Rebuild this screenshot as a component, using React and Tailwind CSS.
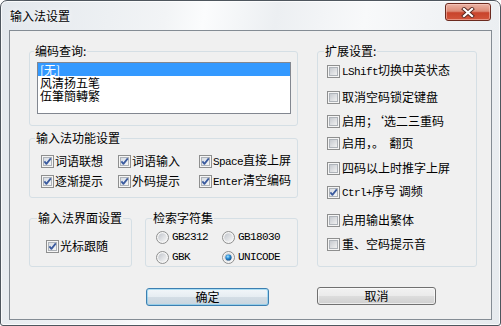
const CJK = "font-['Noto_Sans_CJK_SC','Noto_Sans',sans-serif]";

const Lat = ({ children }) => (
  <span className="font-['Liberation_Mono',monospace] text-[11px] tracking-[-0.6px]">
    {children}
  </span>
);

const CheckBox = ({ checked }) => (
  <svg width="13" height="13" viewBox="0 0 13 13" className="shrink-0">
    <defs>
      <linearGradient id="cbU" x1="0" y1="0" x2="1" y2="1">
        <stop offset="0" stopColor="#c3c7cd" />
        <stop offset="1" stopColor="#f3f3f3" />
      </linearGradient>
      <linearGradient id="cbC" x1="0" y1="0" x2="1" y2="1">
        <stop offset="0" stopColor="#d6dbe2" />
        <stop offset="1" stopColor="#f6f7f8" />
      </linearGradient>
    </defs>
    <rect x="0.5" y="0.5" width="12" height="12" fill="#f5f5f5" stroke="#8e8f8f" />
    <rect
      x="2.5"
      y="2.5"
      width="8"
      height="8"
      fill={checked ? "url(#cbC)" : "url(#cbU)"}
      stroke="#aeb3b9"
    />
    {checked && (
      <path
        d="M3.4 6.4 L5.4 8.9 L9.8 3.4"
        stroke="#3a5a9e"
        strokeWidth="1.7"
        fill="none"
        strokeLinejoin="round"
      />
    )}
  </svg>
);

const Radio = ({ checked }) => (
  <svg width="13" height="13" viewBox="0 0 13 13" className="shrink-0">
    <defs>
      <linearGradient id="rbg" x1="0" y1="0" x2="1" y2="1">
        <stop offset="0" stopColor="#c2c6cc" />
        <stop offset="1" stopColor="#f7f7f7" />
      </linearGradient>
      <radialGradient id="rdot" cx="0.4" cy="0.35" r="0.7">
        <stop offset="0" stopColor="#a8e6ff" />
        <stop offset="0.45" stopColor="#2b8fd8" />
        <stop offset="1" stopColor="#11457a" />
      </radialGradient>
    </defs>
    <circle cx="6.5" cy="6.5" r="6" fill="#f5f5f5" stroke="#8e8f8f" />
    <circle cx="6.5" cy="6.5" r="4.3" fill="url(#rbg)" />
    {checked && <circle cx="6.5" cy="6.5" r="3.1" fill="url(#rdot)" />}
  </svg>
);

const Group = ({ title, className, legend = "ml-[5px]", children }) => (
  <fieldset
    className={`border border-[#d5dfe5] rounded-[3px] min-w-0 shrink-0 ${className}`}
  >
    <legend className={`px-[1px] text-[12px] leading-[12px] text-black ${legend}`}>
      {title}
    </legend>
    {children}
  </fieldset>
);

const Check = ({ checked, gap = "gap-[1px]", children }) => (
  <div className={`h-[20px] flex items-center ${gap} text-[12px] whitespace-pre`}>
    <CheckBox checked={checked} />
    <span>{children}</span>
  </div>
);

const RadioItem = ({ checked, children }) => (
  <div className="h-[16px] flex items-center gap-[3px] text-[12px]">
    <Radio checked={checked} />
    <Lat>{children}</Lat>
  </div>
);

const extOptions = [
  { mt: "mt-[4px]", label: <><Lat>LShift</Lat>切换中英状态</> },
  { mt: "mt-[6px]", label: "取消空码锁定键盘" },
  { mt: "mt-[4px]", label: "启用；‘选二三重码" },
  { mt: "mt-[2px]", label: "启用，。  翻页" },
  { mt: "mt-[5px]", label: "四码以上时推字上屏" },
  { mt: "mt-[4px]", label: <><Lat>Ctrl+</Lat>序号 调频</>, checked: true },
  { mt: "mt-[8px]", label: "启用输出繁体" },
  { mt: "mt-[4px]", label: "重、空码提示音" },
];

export default function App() {
  return (
    <div className="w-[501px] h-[326px] bg-white">
      <div
        className={`w-[501px] h-[326px] rounded-t-[7px] rounded-b-[3px] border border-[#4e565e] shadow-[inset_0_0_0_1px_rgba(255,255,255,0.75)] bg-[linear-gradient(100deg,#e3e8ed_0%,#f2f4f6_30%,#fbfcfd_37%,#eceff2_50%,#f8f9fa_66%,#e6eaee_100%)] flex flex-col px-[8px] pb-[5px] text-black ${CJK}`}
      >
        {/* title bar */}
        <div className="h-[29px] flex items-start">
          <span className="mt-[8px] ml-[1px] text-[12px] leading-[14px] [text-shadow:0_0_6px_#fff]">
            输入法设置
          </span>
          <div className="ml-auto mr-[1px] mt-[2px] w-[46px] h-[18px] rounded-[3px] border border-[#6b2a1f] bg-[linear-gradient(to_bottom,#eab3a5_0%,#dd8c77_45%,#c8432b_55%,#d2553b_100%)] shadow-[inset_0_0_0_1px_rgba(255,210,200,0.5)] flex items-center justify-center">
            <svg width="14" height="11" viewBox="0 0 14 11">
              <path
                d="M3 2 L11 9 M11 2 L3 9"
                stroke="#5a2a22"
                strokeWidth="4"
                strokeLinecap="square"
              />
              <path
                d="M3 2 L11 9 M11 2 L3 9"
                stroke="#ffffff"
                strokeWidth="2.2"
                strokeLinecap="square"
              />
            </svg>
          </div>
        </div>

        {/* client area */}
        <div className="flex-1 border border-[#848c94] bg-[#f0f0f0] pt-[14px] pl-[19px] flex flex-col">
          <div className="flex gap-[19px]">
            <div className="w-[269px] flex flex-col">
              <Group title="编码查询:" className="h-[81px]" legend="ml-[4px]">
                <div className="ml-[7px] mt-[5px] w-[254px] h-[52px] border border-[#828790] bg-white text-[12px] leading-[13px]">
                  <div className="h-[13px] bg-[#3399ff] text-white pl-[2px]">[无]</div>
                  <div className="h-[13px] pl-[2px]">风清扬五笔</div>
                  <div className="h-[13px] pl-[2px]">伍筆簡轉繁</div>
                </div>
              </Group>

              <Group title="输入法功能设置" className="h-[66px] mt-[6px]">
                <div className="mt-[7px] pl-[11px] grid grid-cols-[77px_81px_auto]">
                  <Check checked>词语联想</Check>
                  <Check checked>词语输入</Check>
                  <Check checked>
                    <Lat>Space</Lat>直接上屏
                  </Check>
                  <Check checked>逐渐提示</Check>
                  <Check checked>外码提示</Check>
                  <Check checked>
                    <Lat>Enter</Lat>清空编码
                  </Check>
                </div>
              </Group>

              <div className="flex gap-[13px] mt-[14px]">
                <Group title="输入法界面设置" className="w-[103px] h-[55px]" legend="ml-[7px]">
                  <div className="mt-[12px] pl-[16px]">
                    <Check checked>光标跟随</Check>
                  </div>
                </Group>
                <Group title="检索字符集" className="w-[153px] h-[55px]" legend="ml-[6px]">
                  <div className="mt-[5px] pl-[10px] grid grid-cols-[66px_auto] gap-y-[4px]">
                    <RadioItem>GB2312</RadioItem>
                    <RadioItem>GB18030</RadioItem>
                    <RadioItem>GBK</RadioItem>
                    <RadioItem checked>UNICODE</RadioItem>
                  </div>
                </Group>
              </div>
            </div>

            <Group title="扩展设置:" className="w-[160px] h-[222px]" legend="ml-[6px]">
              <div className="pl-[9px] flex flex-col">
                {extOptions.map((o, i) => (
                  <div key={i} className={o.mt}>
                    <Check checked={o.checked} gap="gap-[2px]">
                      {o.label}
                    </Check>
                  </div>
                ))}
              </div>
            </Group>
          </div>

          {/* buttons */}
          <div className="flex items-start mt-[20px] ml-[117px] gap-[48px] text-[12px]">
            <button className="mt-[1px] w-[123px] h-[18px] rounded-[3px] border border-[#3c7fb1] bg-[linear-gradient(to_bottom,#f2f6f9_0%,#e6edf2_48%,#d3dde5_52%,#c9d5de_100%)] shadow-[inset_0_0_0_1px_rgba(110,200,240,0.55)] leading-[16px]">
              确定
            </button>
            <button className="w-[119px] h-[18px] rounded-[3px] border border-[#707070] bg-[linear-gradient(to_bottom,#f2f2f2_0%,#ebebeb_48%,#dddddd_52%,#cfcfcf_100%)] shadow-[inset_0_0_0_1px_rgba(255,255,255,0.6)] leading-[16px]">
              取消
            </button>
          </div>
        </div>
      </div>
    </div>
  );
}
